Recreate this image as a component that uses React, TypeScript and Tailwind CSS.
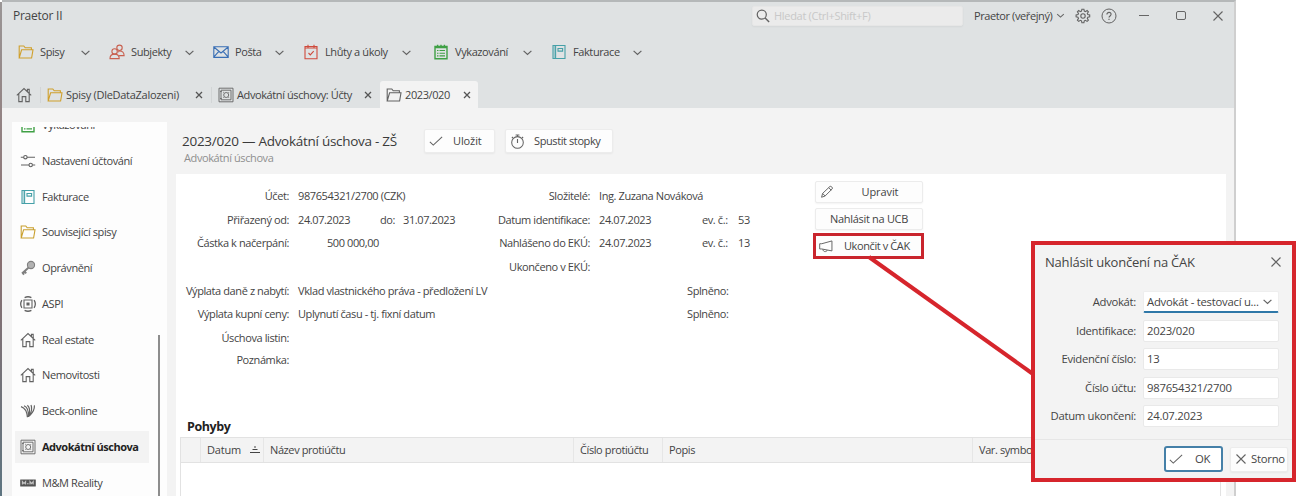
import { ReactNode } from "react";
import clsx from "clsx";

type IconProps = { className?: string };

const Svg = ({ className, children }: { className?: string; children: ReactNode }) => (
  <svg
    viewBox="0 0 16 16"
    fill="none"
    stroke="currentColor"
    strokeWidth="1.1"
    className={clsx("shrink-0", className?.includes("h-[") ? "" : "h-4 w-4", className?.includes("text-") ? "" : "text-[#636363]", className)}
  >
    {children}
  </svg>
);

const FolderIcon = ({ className }: IconProps) => (
  <Svg className={className}>
    <path d="M1.2 14V2h4.6l1.4 1.8h6.2v2M1.2 14 3.6 5.8h11.4L13.6 14z" />
  </Svg>
);

const HomeIcon = ({ className }: IconProps) => (
  <Svg className={className}>
    <path d="M.8 8.4 8 1.5l7.2 6.9M2.8 6.8v7.8h3.4V9.6h3.6v5h3.4V6.8M11.4 4.6V2.4h1.8v4" />
  </Svg>
);

const PeopleIcon = ({ className }: IconProps) => (
  <Svg className={className}>
    <circle cx="10.5" cy="3.8" r="2.7" />
    <circle cx="5.6" cy="7.4" r="2.7" />
    <path d="M1 14.6c0-2.8 1.4-4.5 4.6-4.5s4.6 1.7 4.6 4.5zM9.3 8.2c.4-.8.8-1.2 1.2-1.2 2.9 0 4.6 1.6 4.6 4.6h-5" />
  </Svg>
);

const MailIcon = ({ className }: IconProps) => (
  <Svg className={className}>
    <path d="M.8 2.8h14.4v10.6H.8zM.8 3l7.2 6 7.2-6M.8 13.2l5-5.9M15.2 13.2l-5-5.9" />
  </Svg>
);

const CalendarIcon = ({ className }: IconProps) => (
  <Svg className={className}>
    <path d="M2 2.5h12v12.3H2zM2 4h12M5 .8v2.6M11 .8v2.6" />
    <path d="m5.5 9 1.8 1.9 3.4-3.8" />
  </Svg>
);

const ListIcon = ({ className }: IconProps) => (
  <Svg className={className}>
    <path d="M2 2.5h12v12.3H2zM2 3.6h12M4.6.8v2.6M8 .8v2.6M11.4.8v2.6" strokeWidth="1.4" />
    <path d="M4 6.5h1.5M6.5 6.5H12M4 9.2h1.5M6.5 9.2H12M4 11.9h1.5M6.5 11.9H12" />
  </Svg>
);

const BookIcon = ({ className }: IconProps) => (
  <Svg className={className}>
    <path d="M2 1.5h12v13H2zM4.6 1.5v13" strokeWidth="1.1" />
    <path d="M3.3 2v12" strokeOpacity=".5" />
    <path d="M7 4.5h4.6v2.6H7z" />
  </Svg>
);

const SafeIcon = ({ className }: IconProps) => (
  <Svg className={className}>
    <path d="M1 1.2h14v13.6H1zM3 3.2h10v9.6H3z" strokeWidth=".9" />
    <circle cx="8.2" cy="8" r="2.5" strokeWidth=".9" />
    <path d="M2 4.5h1.8M2 11.5h1.8M5.2 5l.8.8M11.2 5l-.8.8M5.2 11l.8-.8M11.2 11l-.8-.8" strokeWidth=".8" />
  </Svg>
);

const SlidersIcon = ({ className }: IconProps) => (
  <Svg className={className}>
    <path d="M.8 4.2h3M7 4.2h8M1 12h8M12.4 12h2.8" />
    <circle cx="5.4" cy="4.2" r="1.7" />
    <circle cx="10.7" cy="12" r="1.7" />
  </Svg>
);

const KeyIcon = ({ className }: IconProps) => (
  <Svg className={className}>
    <circle cx="11" cy="5" r="3.6" fill="currentColor" fillOpacity=".6" />
    <path d="M8.4 7.8 2 13.6M4.4 11.4l1.8 2M2.4 12.4l1.6 2.2" strokeWidth="2" />
  </Svg>
);

const AspiIcon = ({ className }: IconProps) => (
  <Svg className={className}>
    <path
      d="M4.6 1.6a7.4 7.4 0 0 1 6.8 0M4.6 14.4a7.4 7.4 0 0 0 6.8 0M1.9 4.2a7 7 0 0 0 0 7.6M14.1 4.2a7 7 0 0 1 0 7.6"
      strokeWidth="1.3"
    />
    <path d="M4 4h8v8H4z" />
    <path d="M7 7h2v2H7z" fill="currentColor" />
  </Svg>
);

const BeckIcon = ({ className }: IconProps) => (
  <Svg className={className}>
    <path
      d="M1 3.6c4 1.2 6 5 6.4 10.6M4 2.7c3.4 1.4 4.8 5.2 4.4 11.2M7.4 2.2c2.4 2 2.8 6 1.4 11.4M11 2c1.2 2.8.6 6.8-1.6 11M14.4 2.4c.2 3.2-1.4 7-4.4 10"
      strokeWidth="1.2"
    />
  </Svg>
);

const RealityIcon = ({ className }: IconProps) => (
  <Svg className={className}>
    <path d="M.8 5h14.4v6H.8z" fill="currentColor" />
    <path d="M2.4 9.6V6.6L4 8.6l1.6-2v3M10 9.6V6.6l1.6 2 1.6-2v3M7 8.8h1.6" stroke="#c5c5c5" />
  </Svg>
);

const GearIcon = ({ className }: IconProps) => (
  <Svg className={className}>
    <path d="m6.9 1.2-.4 1.9-1.1.5-1.7-1.1-1.3 1.3 1.1 1.7-.5 1.1-1.9.4v1.9l1.9.4.5 1.1-1.1 1.7 1.3 1.3 1.7-1.1 1.1.5.4 1.9h2l.4-1.9 1.1-.5 1.7 1.1 1.3-1.3-1.1-1.7.5-1.1 1.9-.4V7l-1.9-.4-.5-1.1 1.1-1.7-1.3-1.3-1.7 1.1-1.1-.5-.4-1.9z" />
    <circle cx="8" cy="8" r="2.2" />
  </Svg>
);

const HelpIcon = ({ className }: IconProps) => (
  <Svg className={className}>
    <circle cx="8" cy="8" r="7" strokeWidth="1" />
    <path d="M5.9 6.4c0-2.8 4.2-2.7 4.2-.1 0 1.6-2.1 1.7-2.1 3.3M8 10.8v1.3" />
  </Svg>
);

const SearchIcon = ({ className }: IconProps) => (
  <Svg className={className}>
    <circle cx="6.6" cy="6.4" r="5.2" strokeWidth="1.4" />
    <path d="m10.4 10.2 4.6 4.6" strokeWidth="1.6" />
  </Svg>
);

const CheckIcon = ({ className }: IconProps) => (
  <Svg className={className}>
    <path d="m1 9 3.9 3.7L15 3.2" strokeWidth="1.2" />
  </Svg>
);

const StopwatchIcon = ({ className }: IconProps) => (
  <Svg className={className}>
    <circle cx="8" cy="9" r="6.2" />
    <path d="M8 1v2M6 1h4M8 5.4v4.2M12.8 3.2l1.2 1.2M3.2 3.2 2 4.4" strokeWidth="1.2" />
  </Svg>
);

const PencilIcon = ({ className }: IconProps) => (
  <Svg className={className}>
    <path d="m1.8 14 1.2-4.4 8.4-8c.9-.8 3.6 1.4 2.6 2.8l-8.2 8.2zM3 9.6l2.8 3M10 3l2.8 3" />
  </Svg>
);

const MegaphoneIcon = ({ className }: IconProps) => (
  <Svg className={className}>
    <path d="M.8 5.4v6h2.4l11.6 2.2V2.2L3.2 5.4zM4.4 11.8c.2 3.2 4.4 3.4 5 .9" />
  </Svg>
);

const ChevronIcon = ({ className }: IconProps) => (
  <Svg className={className}>
    <path d="m3.2 6 4.8 4.4L12.8 6" strokeWidth="1.5" />
  </Svg>
);

const CrossIcon = ({ className }: IconProps) => (
  <Svg className={className}>
    <path d="m2 2 12 12M14 2 2 14" strokeWidth="1.5" />
  </Svg>
);

// tab close mark
const CloseIcon = () => (
  <Svg className="h-[8px] w-[8px] text-[#555]">
    <path d="m2 2 12 12M14 2 2 14" strokeWidth="2.6" />
  </Svg>
);

const menu = [
  { label: "Spisy", Icon: FolderIcon, color: "text-[#d0a02c]", width: "w-[91px]" },
  { label: "Subjekty", Icon: PeopleIcon, color: "text-[#c8604f]", width: "w-[104px]" },
  { label: "Pošta", Icon: MailIcon, color: "text-[#3a6fb5]", width: "w-[90px]" },
  { label: "Lhůty a úkoly", Icon: CalendarIcon, color: "text-[#cf4a3c]", width: "w-[127px] mr-[3px]" },
  { label: "Vykazování", Icon: ListIcon, color: "text-[#3fa045]", width: "w-[118px]" },
  { label: "Fakturace", Icon: BookIcon, color: "text-[#45a0a8]", width: "w-[110px]" },
];

const sidebar = [
  { label: "Nastavení účtování", Icon: SlidersIcon },
  { label: "Fakturace", Icon: BookIcon, color: "text-[#45a0a8]" },
  { label: "Související spisy", Icon: FolderIcon, color: "text-[#c9a02f]" },
  { label: "Oprávnění", Icon: KeyIcon, color: "text-[#808080]" },
  { label: "ASPI", Icon: AspiIcon },
  { label: "Real estate", Icon: HomeIcon },
  { label: "Nemovitosti", Icon: HomeIcon },
  { label: "Beck-online", Icon: BeckIcon },
  { label: "Advokátní úschova", Icon: SafeIcon, active: true },
  { label: "M&M Reality", Icon: RealityIcon, color: "text-[#555]" },
];

const TitleBar = () => (
  <div className="flex h-[27px] items-center pl-[11px]">
    <span className="w-[739px] text-[12px] tracking-[-0.25px]">Praetor II</span>
    <div className="flex h-5 w-[211px] items-center gap-1 rounded-xs border border-[#e6e6e6] bg-[#ebebeb] pl-[3px] shadow-xs">
      <SearchIcon className="h-[14px] w-[14px]" />
      <span className="tracking-[-0.3px] text-[#c8c8c8]">Hledat (Ctrl+Shift+F)</span>
    </div>
    <span className="ml-[11px] w-[79px]">Praetor (veřejný)</span>
    <ChevronIcon className="ml-[2px] h-[11px] w-[11px]" />
    <GearIcon className="ml-[9px]" />
    <HelpIcon className="ml-[10px]" />
    <div className="ml-[22px] h-[1.5px] w-[10px] bg-[#666]" />
    <div className="ml-[27px] h-[9px] w-[10px] rounded-[2px] border-[1.5px] border-[#666]" />
    <CrossIcon className="ml-[26px] h-[12px] w-[12px]" />
  </div>
);

const MenuBar = () => (
  <div className="flex h-[46px] items-center pl-[16px]">
    {menu.map(({ label, Icon, color, width }) => (
      <div key={label} className={clsx("flex items-center", width)}>
        <Icon className={color} />
        <span className="ml-[6px]">{label}</span>
        <ChevronIcon className="mr-[17px] ml-auto h-[13px] w-[13px]" />
      </div>
    ))}
  </div>
);

const TabBar = () => (
  <div className="flex h-[27px] items-center pl-[14px]">
    <HomeIcon />
    <div className="mr-[6px] ml-[8px] h-4 w-px bg-[#d2d5d6]" />
    <FolderIcon className="text-[#d0a02c]" />
    <span className="ml-[3px] w-[129px] tracking-[-0.28px]">Spisy (DleDataZalozeni)</span>
    <CloseIcon />
    <div className="mr-[6px] ml-[8px] h-4 w-px bg-[#d2d5d6]" />
    <SafeIcon />
    <span className="ml-[3px] w-[127px]">Advokátní úschovy: Účty</span>
    <CloseIcon />
    <div className="ml-[8px] flex h-full w-[98px] items-center rounded-t-[3px] bg-[#f3f3f3] pl-[6px]">
      <FolderIcon />
      <span className="ml-[3px] w-[58px]">2023/020</span>
      <CloseIcon />
    </div>
  </div>
);

const Sidebar = () => (
  <div className="relative h-[374px] w-[155px] shrink-0 overflow-hidden bg-[#fdfdfd] pl-[3px]">
    <div className="mt-[5px] flex h-[16px] items-start overflow-hidden pl-[5px]">
      <div className="-mt-[10px] flex items-center">
        <ListIcon className="text-[#3fa045]" />
        <span className="ml-[6px] leading-4">Vykazování</span>
      </div>
    </div>
    {sidebar.map(({ label, Icon, color, active }) => (
      <div key={label} className="flex h-[35.75px] items-center">
        <div
          className={clsx(
            "flex h-[32px] w-[134px] items-center pl-[5px]",
            active && "bg-[#f3f3f3] font-bold tracking-[-0.48px] text-[#222]",
          )}
        >
          <Icon className={color} />
          <span className="ml-[6px]">{label}</span>
        </div>
      </div>
    ))}
    <div className="absolute top-[213px] right-[7px] h-[161px] w-[2px] bg-[#8d8d8d]" />
  </div>
);

const Row = ({ label, children }: { label?: string; children?: ReactNode }) => (
  <div className="flex h-[23.7px] items-center">
    <span className="flex w-[113px] shrink-0 justify-end">{label}</span>
    <span className="ml-[9px] flex">{children}</span>
  </div>
);

const Button = ({ className, children }: { className?: string; children: ReactNode }) => (
  <button
    className={clsx(
      "flex shrink-0 items-center rounded-[2px] border border-[#ececec] bg-[#fdfdfd] shadow-xs",
      className,
    )}
  >
    {children}
  </button>
);

const Details = () => (
  <div className="flex h-[242px] pt-[10px]">
    <div className="w-[301px]">
      <Row label="Účet:">987654321/2700 (CZK)</Row>
      <Row label="Přiřazený od:">
        <span className="w-[82px]">24.07.2023</span>
        <span className="w-[23px]">do:</span>
        <span>31.07.2023</span>
      </Row>
      <Row label="Částka k načerpání:">
        <span className="w-[81px] text-right">500 000,00</span>
      </Row>
      <Row />
      <Row label="Výplata daně z nabytí:">Vklad vlastnického práva - předložení LV</Row>
      <Row label="Výplata kupní ceny:">Uplynutí času - tj. fixní datum</Row>
      <Row label="Úschova listin:" />
      <div className="-mt-[2px]">
        <Row label="Poznámka:" />
      </div>
    </div>
    <div className="w-[210px]">
      <Row label="Složitelé:">Ing. Zuzana Nováková</Row>
      <Row label="Datum identifikace:">24.07.2023</Row>
      <Row label="Nahlášeno do EKÚ:">24.07.2023</Row>
      <Row label="Ukončeno v EKÚ:" />
    </div>
    <div className="mt-[23.7px] w-[128px]">
      <div className="flex h-[23.7px] items-center">
        <span className="ml-[15px] w-[36px]">ev. č.:</span>53
      </div>
      <div className="flex h-[23.7px] items-center">
        <span className="ml-[15px] w-[36px]">ev. č.:</span>13
      </div>
      <div className="h-[23.7px]" />
      <div className="flex h-[23.7px] items-center">Splněno:</div>
      <div className="flex h-[23.7px] items-center">Splněno:</div>
    </div>
    <div className="flex flex-col">
      <Button className="-mt-[3px] h-[22px] w-[108px] pl-[4px]">
        <PencilIcon className="h-[14px] w-[14px]" />
        <span className="flex-1 pl-[4px] text-center tracking-[-0.1px]">Upravit</span>
      </Button>
      <Button className="mt-[5px] h-[22px] w-[108px] justify-center tracking-[-0.3px]">Nahlásit na UCB</Button>
      <div className="mt-[3px] -ml-[2px] flex h-[26px] w-[111px] items-center border-[3.5px] border-[#c9252d] bg-[#fdfdfd] pl-[3px]">
        <MegaphoneIcon className="h-[14px] w-[14px]" />
        <span className="ml-[11px]">Ukončit v ČAK</span>
      </div>
    </div>
  </div>
);

const Movements = () => (
  <div className="flex flex-1 flex-col pl-[4px]">
    <h2 className="flex h-[21px] items-center pl-[7px] text-[12.5px] font-bold text-[#222]">Pohyby</h2>
    <div className="mr-[5px] flex flex-1 flex-col border border-b-0 border-[#e2e2e2]">
      <div className="flex h-[25px] items-stretch border-b border-[#e2e2e2] bg-[#f3f3f3]">
        <div className="w-[20px] border-r border-[#e6e6e6]" />
        <div className="flex w-[63px] items-center border-r border-[#e6e6e6] pl-[6px] tracking-[-0.2px]">
          Datum
          <svg viewBox="0 0 10 8" className="ml-[9px] h-[8px] w-[10px]" stroke="currentColor" fill="none">
            <path d="M4 1h2M2.5 3.5h5M0 6.5h10" />
          </svg>
        </div>
        <div className="flex w-[310px] items-center border-r border-[#e6e6e6] pl-[6px]">Název protiúčtu</div>
        <div className="flex w-[89px] items-center border-r border-[#e6e6e6] pl-[6px]">Číslo protiúčtu</div>
        <div className="flex w-[310px] items-center border-r border-[#e6e6e6] pl-[6px]">Popis</div>
        <div className="flex items-center pl-[6px]">Var. symbol</div>
      </div>
    </div>
  </div>
);

const Field = ({ label, value, select }: { label: string; value: string; select?: boolean }) => (
  <div className="flex h-[22px] items-center">
    <span className="w-[101px] text-right tracking-[-0.3px]">{label}</span>
    <div
      className={clsx(
        "ml-[7px] flex h-full w-[136px] items-center rounded-[2px] border bg-white pl-[3px]",
        select ? "border-[#eee] border-b-2 border-b-[#2f78a8]" : "border-[#e9e9e9]",
      )}
    >
      {value}
      {select && <ChevronIcon className="mr-[4px] ml-auto h-[13px] w-[13px]" />}
    </div>
  </div>
);

const Dialog = () => (
  <div className="absolute top-[241px] left-[1031px] flex h-[241px] w-[265px] flex-col border-4 border-[#d6252c] bg-[#f3f3f3] text-[11.3px] tracking-[-0.25px]">
    <div className="flex h-[33px] items-center justify-between pr-[10px] pl-[10px] text-[13px] tracking-[-0.2px]">
      <span>Nahlásit ukončení na ČAK</span>
      <CrossIcon className="h-[12px] w-[12px]" />
    </div>
    <div className="mt-[13px] flex h-[148px] flex-col gap-[6.5px]">
      <Field label="Advokát:" value="Advokát - testovací u..." select />
      <Field label="Identifikace:" value="2023/020" />
      <Field label="Evidenční číslo:" value="13" />
      <Field label="Číslo účtu:" value="987654321/2700" />
      <Field label="Datum ukončení:" value="24.07.2023" />
    </div>
    <div className="flex flex-1 items-center justify-end gap-[7px] border-t border-[#e6e6e6] pr-[4px]">
      <button className="flex h-[26px] w-[59px] items-center gap-[12px] rounded-[3px] border-2 border-[#4580a8] bg-white pl-[3px]">
        <CheckIcon className="h-[14px] w-[14px]" />
        OK
      </button>
      <Button className="h-[25px] w-[58px] gap-[4px] pl-[4px]">
        <CrossIcon className="h-[12px] w-[12px]" />
        Storno
      </Button>
    </div>
  </div>
);

export default function App() {
  return (
    <div className="relative h-[499px] w-[1299px] overflow-hidden bg-white font-['Open_Sans','Noto_Sans',sans-serif] text-[11px] leading-4 tracking-[-0.4px] whitespace-nowrap text-[#444]">
      <div className="flex h-[496px] w-[1236px]">
        <div className="mt-[2px] w-[2px] bg-linear-to-b from-[#9a9696] via-[#8a6f70] to-[#5d7480]" />
        <div className="flex flex-1 flex-col border-t-2 border-r-2 border-t-[#b5b8b9] border-r-[#cfcfcf] bg-[#f3f3f3]">
          <div className="flex h-[106px] shrink-0 flex-col bg-[#dfe2e3]">
            <TitleBar />
            <MenuBar />
            <div className="flex-1" />
            <TabBar />
          </div>
          <div className="flex flex-1">
            <div className="pt-[14px] pl-[10px]">
              <Sidebar />
            </div>
            <div className="ml-[9px] flex flex-1 flex-col pr-[8px]">
              <div className="flex h-[66px] shrink-0 pt-[21px] pl-[6px]">
                <div className="w-[242px]">
                  <h1 className="text-[13.5px] leading-[24px] tracking-[-0.28px] text-[#3a3a3a]">
                    2023/020 — Advokátní úschova - ZŠ
                  </h1>
                  <p className="pl-[2px] leading-[10px] text-[#8f8f8f]">Advokátní úschova</p>
                </div>
                <Button className="h-[24px] w-[71px] pl-[4px]">
                  <CheckIcon className="h-[14px] w-[14px]" />
                  <span className="ml-[10px] tracking-[-0.1px]">Uložit</span>
                </Button>
                <Button className="ml-[10px] h-[24px] w-[108px] pl-[4px]">
                  <StopwatchIcon className="h-[15px] w-[15px]" />
                  <span className="ml-[9px]">Spustit stopky</span>
                </Button>
              </div>
              <div className="flex flex-1 flex-col bg-white">
                <Details />
                <Movements />
              </div>
            </div>
          </div>
        </div>
      </div>
      <svg className="absolute top-[255px] left-[865px] h-[125px] w-[170px]" viewBox="0 0 170 125">
        <path d="M4 2 168 119" stroke="#d6252c" strokeWidth="4" />
      </svg>
      <Dialog />
    </div>
  );
}
